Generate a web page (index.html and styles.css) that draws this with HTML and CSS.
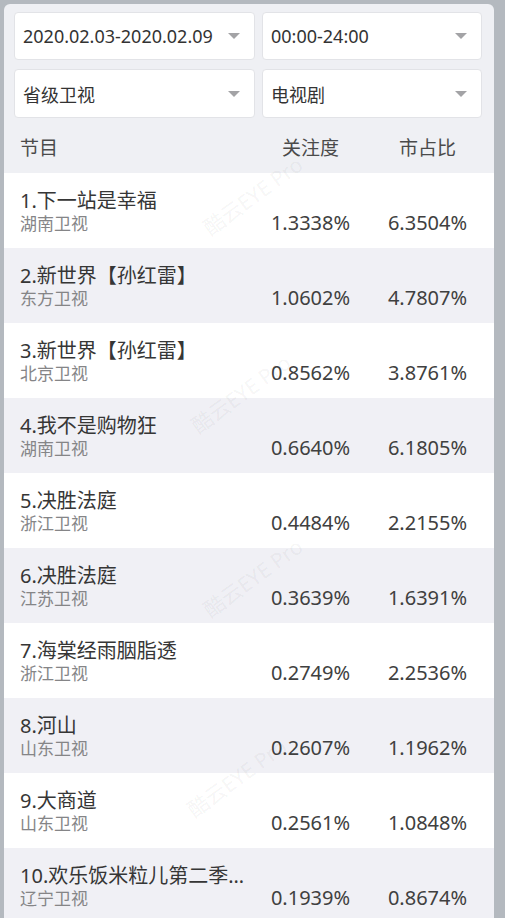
FILE: index.html
```html
<!DOCTYPE html>
<html lang="zh-CN">
<head>
    <meta charset="UTF-8">
    <meta name="viewport" content="width=device-width, initial-scale=1.0">
    <title>电视剧关注度排行</title>
    <link rel="stylesheet" href="styles.css">
</head>
<body>
    <div class="panel">
        <div class="filters">
            <div class="select"><span>2020.02.03-2020.02.09</span><i class="arrow"></i></div>
            <div class="select"><span>00:00-24:00</span><i class="arrow"></i></div>
            <div class="select"><span>省级卫视</span><i class="arrow"></i></div>
            <div class="select"><span>电视剧</span><i class="arrow"></i></div>
        </div>

        <div class="table-head">
            <div>节目</div>
            <div class="num">关注度</div>
            <div class="num">市占比</div>
        </div>

        <div class="rows">
            <div class="row">
                <div class="show"><div class="title">1.下一站是幸福</div><div class="channel">湖南卫视</div></div>
                <div class="num">1.3338%</div><div class="num">6.3504%</div>
            </div>
            <div class="row">
                <div class="show"><div class="title">2.新世界【孙红雷】</div><div class="channel">东方卫视</div></div>
                <div class="num">1.0602%</div><div class="num">4.7807%</div>
            </div>
            <div class="row">
                <div class="show"><div class="title">3.新世界【孙红雷】</div><div class="channel">北京卫视</div></div>
                <div class="num">0.8562%</div><div class="num">3.8761%</div>
            </div>
            <div class="row">
                <div class="show"><div class="title">4.我不是购物狂</div><div class="channel">湖南卫视</div></div>
                <div class="num">0.6640%</div><div class="num">6.1805%</div>
            </div>
            <div class="row">
                <div class="show"><div class="title">5.决胜法庭</div><div class="channel">浙江卫视</div></div>
                <div class="num">0.4484%</div><div class="num">2.2155%</div>
            </div>
            <div class="row">
                <div class="show"><div class="title">6.决胜法庭</div><div class="channel">江苏卫视</div></div>
                <div class="num">0.3639%</div><div class="num">1.6391%</div>
            </div>
            <div class="row">
                <div class="show"><div class="title">7.海棠经雨胭脂透</div><div class="channel">浙江卫视</div></div>
                <div class="num">0.2749%</div><div class="num">2.2536%</div>
            </div>
            <div class="row">
                <div class="show"><div class="title">8.河山</div><div class="channel">山东卫视</div></div>
                <div class="num">0.2607%</div><div class="num">1.1962%</div>
            </div>
            <div class="row">
                <div class="show"><div class="title">9.大商道</div><div class="channel">山东卫视</div></div>
                <div class="num">0.2561%</div><div class="num">1.0848%</div>
            </div>
            <div class="row">
                <div class="show"><div class="title">10.欢乐饭米粒儿第二季…</div><div class="channel">辽宁卫视</div></div>
                <div class="num">0.1939%</div><div class="num">0.8674%</div>
            </div>
        </div>

        <!-- watermarks -->
        <div class="watermark wm1">酷云EYE Pro</div>
        <div class="watermark wm2">酷云EYE Pro</div>
        <div class="watermark wm3">酷云EYE Pro</div>
        <div class="watermark wm4">酷云EYE Pro</div>
    </div>
</body>
</html>
```

FILE: styles.css
```css
body {
    margin: 0;
    background-color: #b4b9bf;
    font-family: "Noto Sans", "Noto Sans CJK SC", sans-serif;
    color: #333;
    overflow: hidden;
}

.panel {
    position: relative;
    margin: 4px 11px 0 4px;
    height: 914px;
    background-color: #eff0f4;
    border-radius: 6px 6px 0 0;
    overflow: hidden;
}

.filters {
    display: grid;
    grid-template-columns: 241px 220px;
    column-gap: 7px;
    row-gap: 9px;
    padding: 8px 10px 0 10px;
}

.select {
    display: flex;
    align-items: center;
    justify-content: space-between;
    height: 46px;
    padding: 0 14px 0 8px;
    background-color: #fff;
    border: 1px solid #e2e3e7;
    border-radius: 4px;
    font-size: 18px;
    color: #333;
}

.select:nth-child(n+3) {
    height: 47px;
}

.arrow {
    width: 0;
    height: 0;
    border-left: 6px solid transparent;
    border-right: 6px solid transparent;
    border-top: 6px solid #a3a3a6;
}

.table-head,
.row {
    display: grid;
    grid-template-columns: 232px 117px 117px;
    padding-left: 16px;
}

.table-head {
    height: 52px;
    margin-top: 3px;
    align-items: center;
    font-size: 19px;
    color: #4a4a4a;
}

.num {
    text-align: center;
}

.row {
    height: 75px;
    box-sizing: border-box;
    padding-top: 16px;
    background-color: #fff;
}

.row:nth-child(even) {
    background-color: #f0f0f5;
}

.title {
    font-size: 20px;
    line-height: 24px;
    color: #363636;
    white-space: nowrap;
}

.channel {
    font-size: 17px;
    line-height: 22px;
    color: #858587;
}

.row .num {
    align-self: end;
    padding-bottom: 13px;
    font-size: 20px;
    line-height: 24px;
    color: #404040;
}

.watermark {
    position: absolute;
    font-size: 21px;
    color: rgba(0, 0, 0, 0.055);
    white-space: nowrap;
    transform: rotate(-36deg);
    pointer-events: none;
}

.wm1 { left: 190px; top: 176px; }
.wm2 { left: 178px; top: 374px; }
.wm3 { left: 190px; top: 558px; }
.wm4 { left: 174px; top: 758px; }
```
